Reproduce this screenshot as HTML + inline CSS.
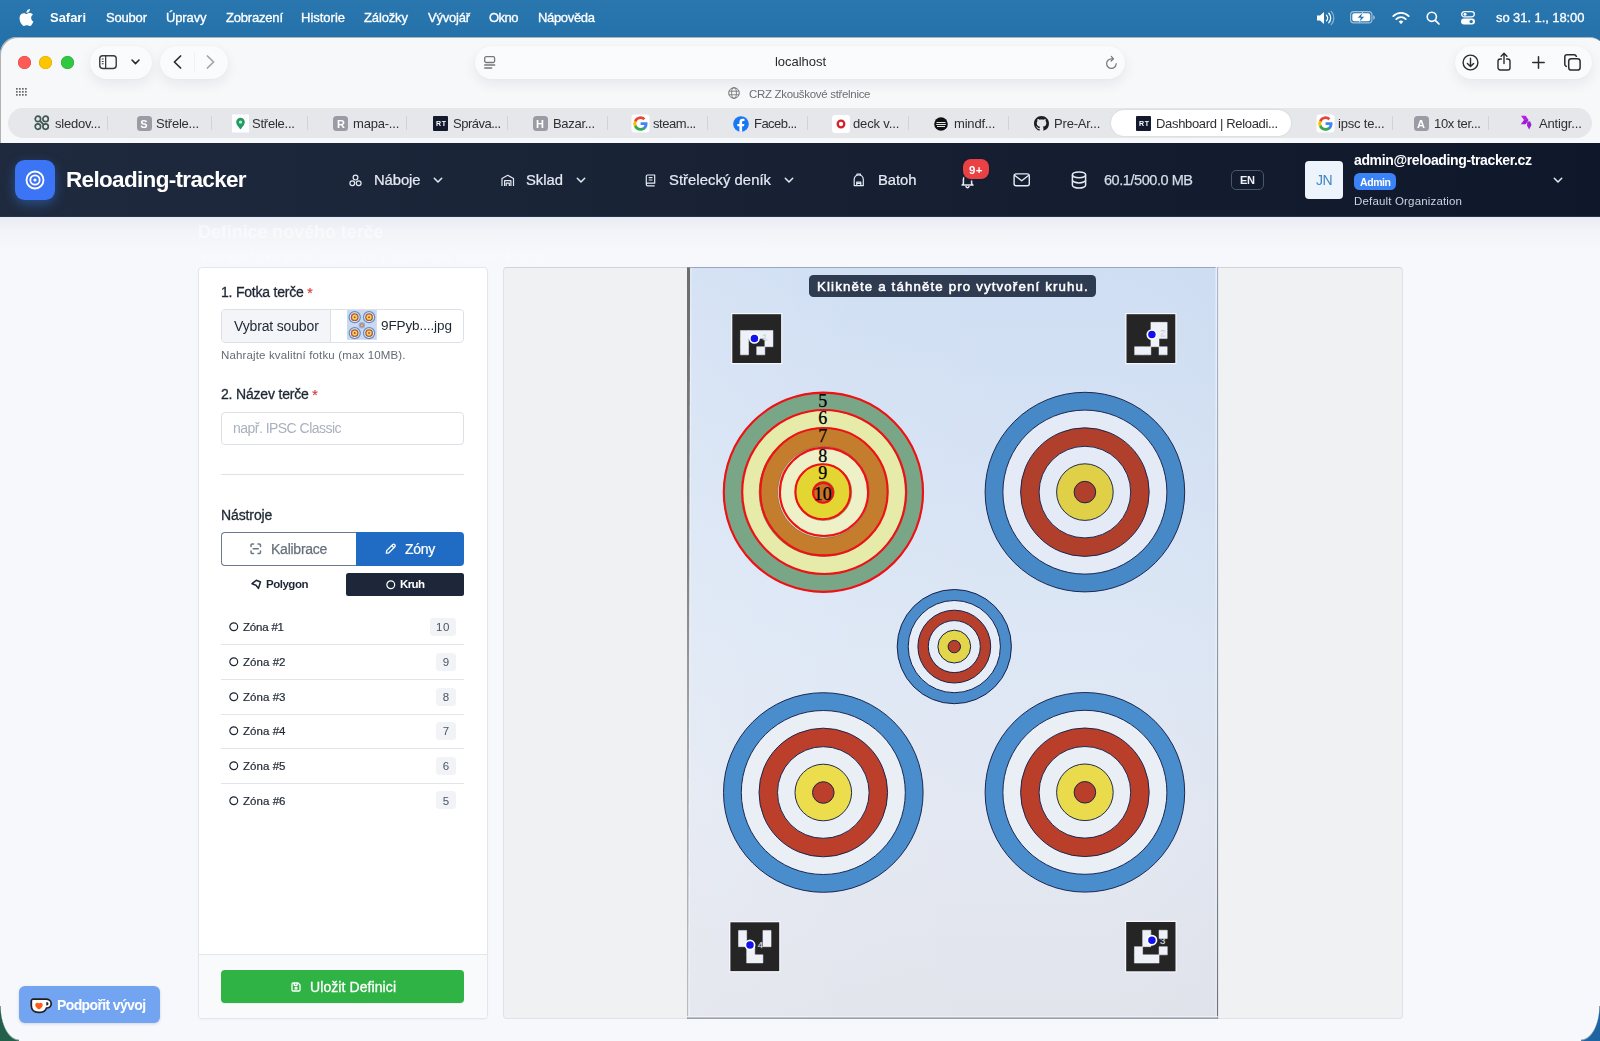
<!DOCTYPE html>
<html lang="cs"><head><meta charset="utf-8"><title>Dashboard | Reloading-tracker</title><style>
html,body{margin:0;padding:0}
body{width:1600px;height:1041px;overflow:hidden;position:relative;background:#2673ac;
 font-family:"Liberation Sans",sans-serif;-webkit-font-smoothing:antialiased}
.t{position:absolute;line-height:0;white-space:nowrap;display:block;will-change:transform}
svg{display:block;overflow:visible}
</style></head>
<body>
<div style="position:absolute;left:0px;top:0px;width:1600px;height:60px;background:linear-gradient(#2a76ae,#2572ab 60%,#2470a8)"></div>
<svg style="position:absolute;left:17.5px;top:8px;" width="17" height="19" viewBox="2 1 20 22"><path fill="#fff" d="M18.71 19.5c-.83 1.24-1.71 2.45-3.05 2.47-1.34.03-1.77-.79-3.29-.79-1.53 0-2 .77-3.27.82-1.31.05-2.3-1.32-3.14-2.53C4.25 17 2.94 12.45 4.7 9.39c.87-1.52 2.43-2.48 4.12-2.51 1.28-.02 2.5.87 3.29.87.78 0 2.26-1.07 3.81-.91.65.03 2.47.26 3.64 1.98-.09.06-2.17 1.28-2.15 3.81.03 3.02 2.65 4.03 2.68 4.04-.03.07-.42 1.44-1.38 2.83M13 3.5c.73-.83 1.94-1.46 2.94-1.5.13 1.17-.34 2.35-1.04 3.19-.69.85-1.83 1.51-2.95 1.42-.15-1.15.41-2.35 1.05-3.11z"/></svg>
<span id="t0" class="t" style="left:50.0px;top:18.2px;font-size:13px;color:#fff;font-weight:700;letter-spacing:-0.028px;">Safari</span>
<span id="t1" class="t" style="left:105.5px;top:18.2px;font-size:13px;color:#fff;letter-spacing:-0.184px;-webkit-text-stroke:0.3px #fff;">Soubor</span>
<span id="t2" class="t" style="left:165.5px;top:18.2px;font-size:13px;color:#fff;letter-spacing:-0.138px;-webkit-text-stroke:0.3px #fff;">Úpravy</span>
<span id="t3" class="t" style="left:225.5px;top:18.2px;font-size:13px;color:#fff;letter-spacing:-0.193px;-webkit-text-stroke:0.3px #fff;">Zobrazení</span>
<span id="t4" class="t" style="left:301.0px;top:18.2px;font-size:13px;color:#fff;letter-spacing:-0.011px;-webkit-text-stroke:0.3px #fff;">Historie</span>
<span id="t5" class="t" style="left:364.0px;top:18.2px;font-size:13px;color:#fff;letter-spacing:-0.133px;-webkit-text-stroke:0.3px #fff;">Záložky</span>
<span id="t6" class="t" style="left:427.5px;top:18.2px;font-size:13px;color:#fff;letter-spacing:-0.227px;-webkit-text-stroke:0.3px #fff;">Vývojář</span>
<span id="t7" class="t" style="left:488.5px;top:18.2px;font-size:13px;color:#fff;letter-spacing:-0.526px;-webkit-text-stroke:0.3px #fff;">Okno</span>
<span id="t8" class="t" style="left:538.0px;top:18.2px;font-size:13px;color:#fff;letter-spacing:-0.326px;-webkit-text-stroke:0.3px #fff;">Nápověda</span>
<span id="t9" class="t" style="left:1495.5px;top:18.2px;font-size:13px;color:#fff;letter-spacing:-0.075px;-webkit-text-stroke:0.3px #fff;">so 31. 1., 18:00</span>
<svg style="position:absolute;left:1316px;top:10px;" width="20" height="16" viewBox="0 0 20 16"><path fill="#fff" d="M1 5.5h3l4-3.5v12l-4-3.5H1z"/><path d="M10.5 5.2a4 4 0 0 1 0 5.6M12.8 3.2a7 7 0 0 1 0 9.6" fill="none" stroke="#fff" stroke-width="1.3" stroke-linecap="round"/><path d="M15.2 1.4a9.6 9.6 0 0 1 0 13.2" fill="none" stroke="#fff" stroke-opacity=".45" stroke-width="1.3" stroke-linecap="round"/></svg>
<svg style="position:absolute;left:1350px;top:11px;" width="26" height="13" viewBox="0 0 26 13"><rect x=".6" y=".6" width="21.3" height="11.3" rx="3.2" fill="none" stroke="#fff" stroke-opacity=".55" stroke-width="1.2"/><rect x="2.3" y="2.3" width="17.9" height="7.9" rx="1.8" fill="#fff"/><path d="M23.3 4.2v4.6c.9-.3 1.5-1.3 1.5-2.3s-.6-2-1.5-2.3z" fill="#fff" fill-opacity=".6"/><path d="M12.6 1.2 7.4 6.9h3.1l-1.2 4.4 5.3-5.8h-3.2z" fill="#2572ab" stroke="#fff" stroke-width=".5"/></svg>
<svg style="position:absolute;left:1391.5px;top:10.5px;" width="18" height="14" viewBox="0 0 18 14"><path d="M9 13.2l2.3-2.7a3.4 3.4 0 0 0-4.6 0z" fill="#fff"/><path d="M4.3 8.1a6.6 6.6 0 0 1 9.4 0M1.3 5.1a10.8 10.8 0 0 1 15.4 0" fill="none" stroke="#fff" stroke-width="1.9" stroke-linecap="round"/></svg>
<svg style="position:absolute;left:1426px;top:10.5px;" width="14" height="14" viewBox="0 0 14 14"><circle cx="5.8" cy="5.8" r="4.6" fill="none" stroke="#fff" stroke-width="1.6"/><path d="M9.3 9.3l3.7 3.7" stroke="#fff" stroke-width="1.7" stroke-linecap="round"/></svg>
<svg style="position:absolute;left:1460.5px;top:11px;" width="14" height="14" viewBox="0 0 14 14"><rect x=".7" y=".7" width="12.6" height="5.2" rx="2.6" fill="none" stroke="#fff" stroke-width="1.3"/><circle cx="4" cy="3.3" r="1.5" fill="#fff"/><rect x="0" y="7.6" width="14" height="6" rx="3" fill="#fff"/><circle cx="10.2" cy="10.6" r="1.7" fill="#2572ab"/></svg>
<div style="position:absolute;left:0px;top:37px;width:1606px;height:1004px;background:#f7f8fa;border-radius:17px 17px 0 0;box-shadow:inset 1px 1px 0 rgba(120,120,125,.55)"></div>
<div style="position:absolute;left:17.9px;top:55.5px;width:13px;height:13px;border-radius:50%;background:#fd5b56;box-shadow:inset 0 0 0 .6px #e2453f"></div>
<div style="position:absolute;left:39.3px;top:55.5px;width:13px;height:13px;border-radius:50%;background:#fdc400;box-shadow:inset 0 0 0 .6px #e0a900"></div>
<div style="position:absolute;left:61px;top:55.5px;width:13px;height:13px;border-radius:50%;background:#2fc840;box-shadow:inset 0 0 0 .6px #22ab33"></div>
<div style="position:absolute;left:89.5px;top:45.5px;width:62.5px;height:33px;background:#fafbfc;border-radius:17px;box-shadow:0 5px 13px rgba(20,30,50,.075),0 0 2px rgba(0,0,0,.035)"></div>
<div style="position:absolute;left:160px;top:45.5px;width:68px;height:33px;background:#fafbfc;border-radius:17px;box-shadow:0 5px 13px rgba(20,30,50,.075),0 0 2px rgba(0,0,0,.035)"></div>
<svg style="position:absolute;left:99.2px;top:54.6px;" width="18" height="14.2" viewBox="0 0 19 15"><rect x=".8" y=".8" width="17.4" height="13.4" rx="3" fill="none" stroke="#3c3c40" stroke-width="1.5"/><path d="M7 1v13" stroke="#3c3c40" stroke-width="1.4"/><path d="M2.9 4.3h2M2.9 6.8h2M2.9 9.3h2" stroke="#3c3c40" stroke-width="1.1"/></svg>
<svg style="position:absolute;left:130.5px;top:58.5px;" width="9" height="6" viewBox="0 0 9 6"><path d="M1 1l3.5 3.6L8 1" fill="none" stroke="#2c2c2e" stroke-width="1.6" stroke-linecap="round" stroke-linejoin="round"/></svg>
<svg style="position:absolute;left:172.5px;top:55px;" width="9" height="14" viewBox="0 0 9 14"><path d="M7.6 1L1.4 7l6.2 6" fill="none" stroke="#2c2c2e" stroke-width="1.7" stroke-linecap="round" stroke-linejoin="round"/></svg>
<svg style="position:absolute;left:206px;top:55px;" width="9" height="14" viewBox="0 0 9 14"><path d="M1.4 1l6.2 6-6.2 6" fill="none" stroke="#a3a3a8" stroke-width="1.7" stroke-linecap="round" stroke-linejoin="round"/></svg>
<div style="position:absolute;left:194px;top:52px;width:1px;height:20px;background:#f0f1f3"></div>
<div style="position:absolute;left:475px;top:45.5px;width:650px;height:33px;background:#fafbfc;border-radius:17px;box-shadow:0 5px 13px rgba(20,30,50,.075),0 0 2px rgba(0,0,0,.035)"></div>
<svg style="position:absolute;left:484px;top:55.5px;" width="12" height="13" viewBox="0 0 12 13"><rect x=".700" y=".700" width="9.900" height="5.800" rx="1.500" fill="none" stroke="#77777b" stroke-width="1.300"/><path d="M.700 9h10M.700 12h7" stroke="#77777b" stroke-width="1.300" stroke-linecap="round"/></svg>
<span id="t10" class="t" style="left:775.0px;top:62.4px;font-size:13px;color:#2a2a2c;letter-spacing:-0.039px;">localhost</span>
<svg style="position:absolute;left:1105px;top:55px;" width="13" height="15" viewBox="0 0 13 15"><path d="M11.2 8.6a4.8 4.8 0 1 1-4.8-4.8h1.4" fill="none" stroke="#77777b" stroke-width="1.2" stroke-linecap="round"/><path d="M6.3 1.4l2.2 2.4-2.4 2.2" fill="none" stroke="#77777b" stroke-width="1.2" stroke-linecap="round" stroke-linejoin="round"/></svg>
<div style="position:absolute;left:1455px;top:45.5px;width:136.5px;height:33px;background:#fafbfc;border-radius:17px;box-shadow:0 5px 13px rgba(20,30,50,.075),0 0 2px rgba(0,0,0,.035)"></div>
<svg style="position:absolute;left:1462px;top:53.5px;" width="17" height="17" viewBox="0 0 17 17"><circle cx="8.5" cy="8.5" r="7.4" fill="none" stroke="#2c2c2e" stroke-width="1.4"/><path d="M8.5 4.3v8M5.4 9.4l3.1 3.1 3.1-3.1" fill="none" stroke="#2c2c2e" stroke-width="1.4" stroke-linecap="round" stroke-linejoin="round"/></svg>
<svg style="position:absolute;left:1497px;top:51.5px;" width="14" height="19" viewBox="0 0 14 19"><path d="M4.4 7H3.2A2.2 2.2 0 0 0 1 9.2v6.6A2.2 2.2 0 0 0 3.2 18h7.6a2.2 2.2 0 0 0 2.2-2.2V9.2A2.2 2.2 0 0 0 10.800 7H9.600" fill="none" stroke="#2c2c2e" stroke-width="1.4" stroke-linecap="round"/><path d="M7 11.600V1.400M4.1 4.200L7 1.300l2.900 2.900" fill="none" stroke="#2c2c2e" stroke-width="1.4" stroke-linecap="round" stroke-linejoin="round"/></svg>
<svg style="position:absolute;left:1532px;top:55.5px;" width="13" height="13" viewBox="0 0 13 13"><path d="M6.5.8v11.400M.8 6.500h11.400" stroke="#2c2c2e" stroke-width="1.5" stroke-linecap="round"/></svg>
<svg style="position:absolute;left:1564px;top:53.5px;" width="17" height="17" viewBox="0 0 17 17"><rect x="4.700" y="4.700" width="11.400" height="11.400" rx="2.600" fill="none" stroke="#2c2c2e" stroke-width="1.500"/><path d="M12.400 2.600V2.900A2.100 2.100 0 0 0 10.300.8H3A2.200 2.200 0 0 0 .8 3v7.300a2.100 2.100 0 0 0 2.100 2.100h-.3" fill="none" stroke="#2c2c2e" stroke-width="1.500" stroke-linecap="round"/></svg>
<svg style="position:absolute;left:15.5px;top:87.5px;" width="11" height="8" viewBox="0 0 11 8"><rect x="0" y="0" width="1.700" height="1.700" fill="#6a6a6e"/><rect x="3" y="0" width="1.700" height="1.700" fill="#6a6a6e"/><rect x="6" y="0" width="1.700" height="1.700" fill="#6a6a6e"/><rect x="9" y="0" width="1.700" height="1.700" fill="#6a6a6e"/><rect x="0" y="3" width="1.700" height="1.700" fill="#6a6a6e"/><rect x="3" y="3" width="1.700" height="1.700" fill="#6a6a6e"/><rect x="6" y="3" width="1.700" height="1.700" fill="#6a6a6e"/><rect x="9" y="3" width="1.700" height="1.700" fill="#6a6a6e"/><rect x="0" y="6" width="1.700" height="1.700" fill="#6a6a6e"/><rect x="3" y="6" width="1.700" height="1.700" fill="#6a6a6e"/><rect x="6" y="6" width="1.700" height="1.700" fill="#6a6a6e"/><rect x="9" y="6" width="1.700" height="1.700" fill="#6a6a6e"/></svg>
<svg style="position:absolute;left:728px;top:87px;" width="12" height="12" viewBox="0 0 12 12"><circle cx="6" cy="6" r="5.300" fill="none" stroke="#77777b" stroke-width="1"/><ellipse cx="6" cy="6" rx="2.400" ry="5.300" fill="none" stroke="#77777b" stroke-width=".9"/><path d="M.9 4.200h10.200M.9 7.800h10.200" stroke="#77777b" stroke-width=".9"/></svg>
<span id="t11" class="t" style="left:748.5px;top:93.5px;font-size:11.5px;color:#6e6e73;letter-spacing:-0.317px;">CRZ Zkouškové střelnice</span>
<div style="position:absolute;left:7.5px;top:108px;width:1584.5px;height:29.5px;background:#e5e7ea;border-radius:15px"></div>
<div style="position:absolute;left:1110.6px;top:109.5px;width:180px;height:26.5px;background:#fff;border-radius:13.500px;box-shadow:0 0 2px rgba(0,0,0,.12)"></div>
<div style="position:absolute;left:106.8px;top:116px;width:1px;height:14px;background:#d2d3d8"></div>
<div style="position:absolute;left:210.5px;top:116px;width:1px;height:14px;background:#d2d3d8"></div>
<div style="position:absolute;left:307.3px;top:116px;width:1px;height:14px;background:#d2d3d8"></div>
<div style="position:absolute;left:406.2px;top:116px;width:1px;height:14px;background:#d2d3d8"></div>
<div style="position:absolute;left:506.8px;top:116px;width:1px;height:14px;background:#d2d3d8"></div>
<div style="position:absolute;left:607.2px;top:116px;width:1px;height:14px;background:#d2d3d8"></div>
<div style="position:absolute;left:707.1px;top:116px;width:1px;height:14px;background:#d2d3d8"></div>
<div style="position:absolute;left:807.4px;top:116px;width:1px;height:14px;background:#d2d3d8"></div>
<div style="position:absolute;left:907.5px;top:116px;width:1px;height:14px;background:#d2d3d8"></div>
<div style="position:absolute;left:1007.9px;top:116px;width:1px;height:14px;background:#d2d3d8"></div>
<div style="position:absolute;left:1391.9px;top:116px;width:1px;height:14px;background:#d2d3d8"></div>
<div style="position:absolute;left:1488.1px;top:116px;width:1px;height:14px;background:#d2d3d8"></div>
<svg style="position:absolute;left:34px;top:115px;" width="15.5" height="15.5" viewBox="0 0 15.5 15.5"><g fill="none" stroke="#3f5853" stroke-width="1.700"><circle cx="3.900" cy="3.900" r="2.700"/><circle cx="11.600" cy="3.900" r="2.700"/><circle cx="3.900" cy="11.600" r="2.700"/><circle cx="11.600" cy="11.600" r="2.700"/><path d="M5.900 5.900l3.700 3.700"/></g></svg>
<span id="t12" class="t" style="left:54.7px;top:123.5px;font-size:13px;color:#2f2f33;letter-spacing:-0.194px;">sledov...</span>
<div style="position:absolute;left:136.7px;top:116px;width:15px;height:15px;background:#9b9ba6;border-radius:3.500px"><span id="t13" class="t" style="left:7.5px;top:7.8px;font-size:11px;color:#fff;transform:translateX(-50%);font-weight:700;">S</span></div>
<span id="t14" class="t" style="left:156.0px;top:123.5px;font-size:13px;color:#2f2f33;letter-spacing:-0.225px;">Střele...</span>
<svg style="position:absolute;left:233px;top:116px;" width="15" height="15" viewBox="0 0 15 15"><rect x="-1" y="-1.500" width="17" height="18" fill="#fff"/><path d="M7.500 1.800a4.300 4.300 0 0 0-4.300 4.300c0 3 4.300 7.400 4.300 7.400s4.300-4.400 4.300-7.400a4.300 4.300 0 0 0-4.300-4.300z" fill="#1f9d63"/><circle cx="7.500" cy="6.100" r="1.700" fill="#bfe8d2"/></svg>
<span id="t15" class="t" style="left:252.4px;top:123.5px;font-size:13px;color:#2f2f33;letter-spacing:-0.237px;">Střele...</span>
<div style="position:absolute;left:333px;top:116px;width:15px;height:15px;background:#9b9ba6;border-radius:3.500px"><span id="t16" class="t" style="left:7.5px;top:7.8px;font-size:11px;color:#fff;transform:translateX(-50%);font-weight:700;">R</span></div>
<span id="t17" class="t" style="left:352.7px;top:123.5px;font-size:13px;color:#2f2f33;letter-spacing:-0.198px;">mapa-...</span>
<div style="position:absolute;left:433px;top:116px;width:15px;height:15px;background:#131a2e;border-radius:1px"><span id="t18" class="t" style="left:2.5px;top:7.7px;font-size:7px;color:#fff;font-weight:700;letter-spacing:0.656px;">RT</span></div>
<span id="t19" class="t" style="left:453.0px;top:123.5px;font-size:13px;color:#2f2f33;letter-spacing:-0.504px;">Správa...</span>
<div style="position:absolute;left:532.8px;top:116px;width:15px;height:15px;background:#9b9ba6;border-radius:3.500px"><span id="t20" class="t" style="left:7.5px;top:7.8px;font-size:11px;color:#fff;transform:translateX(-50%);font-weight:700;">H</span></div>
<span id="t21" class="t" style="left:553.0px;top:123.5px;font-size:13px;color:#2f2f33;letter-spacing:-0.297px;">Bazar...</span>
<svg style="position:absolute;left:633px;top:116px;" width="15" height="15" viewBox="0 0 15 15"><rect x="-1.500" y="-1.500" width="18" height="18" rx="3" fill="#fff"/><path d="M14.500 7.700c0-.5 0-1-.1-1.400H7.600v2.700h3.900a3.300 3.300 0 0 1-1.400 2.200v1.800h2.300c1.300-1.200 2.100-3 2.100-5.300z" fill="#4285f4"/><path d="M7.600 14.800c1.900 0 3.600-.6 4.800-1.800l-2.300-1.800c-.7.400-1.500.7-2.500.7-1.900 0-3.500-1.300-4.100-3H1.100v1.900a7.200 7.200 0 0 0 6.500 4z" fill="#34a853"/><path d="M3.500 8.900a4.300 4.300 0 0 1 0-2.800V4.200H1.100a7.200 7.200 0 0 0 0 6.500z" fill="#fbbc05"/><path d="M7.600 3.100c1.100 0 2 .4 2.800 1.100l2-2A7.200 7.200 0 0 0 1.100 4.200l2.400 1.900c.6-1.700 2.200-3 4.100-3z" fill="#ea4335"/></svg>
<span id="t22" class="t" style="left:653.3px;top:123.5px;font-size:13px;color:#2f2f33;letter-spacing:-0.436px;">steam...</span>
<svg style="position:absolute;left:733.3px;top:115.5px;" width="16" height="16" viewBox="0 0 16 16"><circle cx="8" cy="8" r="7.800" fill="#1877f2"/><path d="M11 10.300l.4-2.400H9.100V6.400c0-.7.300-1.300 1.300-1.300h1.100V3c-.5-.1-1.200-.200-1.900-.200-2 0-3.200 1.200-3.200 3.300v1.800H4.300v2.400h2.100v5.400a8 8 0 0 0 2.700 0v-5.400z" fill="#fff"/></svg>
<span id="t23" class="t" style="left:753.5px;top:123.5px;font-size:13px;color:#2f2f33;letter-spacing:-0.538px;">Faceb...</span>
<svg style="position:absolute;left:832.9px;top:115.5px;" width="16" height="16" viewBox="0 0 16 16"><rect x="-1" y="-1" width="18" height="18" rx="3" fill="#fff"/><circle cx="8" cy="8" r="3.300" fill="none" stroke="#d6202a" stroke-width="2.300"/></svg>
<span id="t24" class="t" style="left:853.4px;top:123.5px;font-size:13px;color:#2f2f33;letter-spacing:-0.144px;">deck v...</span>
<svg style="position:absolute;left:934.4px;top:116.5px;" width="14" height="14" viewBox="0 0 14 14"><circle cx="7" cy="7" r="6.800" fill="#111"/><path d="M2.500 5.500h9M2.200 7.500h9.600M3 9.500h8" stroke="#e8e8e8" stroke-width="1"/></svg>
<span id="t25" class="t" style="left:953.7px;top:123.5px;font-size:13px;color:#2f2f33;letter-spacing:-0.189px;">mindf...</span>
<svg style="position:absolute;left:1033.7px;top:116px;" width="15" height="15" viewBox="0 0 16 16"><path fill="#1b1f23" d="M8 0C3.580 0 0 3.580 0 8c0 3.540 2.290 6.530 5.470 7.590.4.070.55-.17.550-.38 0-.19-.01-.82-.01-1.490-2.010.37-2.530-.49-2.690-.94-.09-.23-.48-.94-.82-1.130-.28-.15-.68-.52-.01-.53.630-.01 1.080.58 1.230.82.720 1.210 1.870.87 2.330.66.070-.52.280-.87.510-1.070-1.780-.2-3.640-.89-3.640-3.950 0-.87.310-1.590.82-2.150-.08-.2-.36-1.020.08-2.120 0 0 .67-.21 2.200.82.640-.18 1.320-.27 2-.27s1.360.09 2 .27c1.530-1.040 2.200-.82 2.200-.82.440 1.100.16 1.920.08 2.120.51.560.82 1.270.82 2.150 0 3.070-1.870 3.750-3.650 3.950.29.250.54.730.54 1.480 0 1.070-.01 1.930-.01 2.200 0 .21.150.46.550.38A8.010 8.010 0 0 0 16 8c0-4.420-3.580-8-8-8z"/></svg>
<span id="t26" class="t" style="left:1053.5px;top:123.5px;font-size:13px;color:#2f2f33;letter-spacing:-0.173px;">Pre-Ar...</span>
<div style="position:absolute;left:1136px;top:116px;width:15px;height:15px;background:#131a2e;border-radius:1px"><span id="t27" class="t" style="left:2.5px;top:7.7px;font-size:7px;color:#fff;font-weight:700;letter-spacing:0.656px;">RT</span></div>
<span id="t28" class="t" style="left:1155.5px;top:123.5px;font-size:13px;color:#2f2f33;letter-spacing:-0.330px;">Dashboard | Reloadi...</span>
<svg style="position:absolute;left:1317.5px;top:116px;" width="15" height="15" viewBox="0 0 15 15"><rect x="-1.500" y="-1.500" width="18" height="18" rx="3" fill="#fff"/><path d="M14.500 7.700c0-.5 0-1-.1-1.400H7.600v2.700h3.900a3.300 3.300 0 0 1-1.400 2.200v1.800h2.300c1.300-1.200 2.100-3 2.100-5.300z" fill="#4285f4"/><path d="M7.600 14.800c1.900 0 3.600-.6 4.800-1.800l-2.300-1.800c-.7.400-1.500.7-2.500.7-1.900 0-3.500-1.300-4.100-3H1.100v1.900a7.200 7.200 0 0 0 6.500 4z" fill="#34a853"/><path d="M3.500 8.900a4.300 4.300 0 0 1 0-2.800V4.200H1.100a7.200 7.200 0 0 0 0 6.500z" fill="#fbbc05"/><path d="M7.600 3.100c1.100 0 2 .4 2.800 1.100l2-2A7.200 7.200 0 0 0 1.100 4.200l2.400 1.900c.6-1.700 2.200-3 4.100-3z" fill="#ea4335"/></svg>
<span id="t29" class="t" style="left:1338.4px;top:123.5px;font-size:13px;color:#2f2f33;letter-spacing:-0.202px;">ipsc te...</span>
<div style="position:absolute;left:1413.7px;top:116px;width:15px;height:15px;background:#9b9ba6;border-radius:3.500px"><span id="t30" class="t" style="left:7.5px;top:7.8px;font-size:11px;color:#fff;transform:translateX(-50%);font-weight:700;">A</span></div>
<span id="t31" class="t" style="left:1434.0px;top:123.5px;font-size:13px;color:#2f2f33;letter-spacing:-0.331px;">10x ter...</span>
<svg style="position:absolute;left:1520px;top:115px;" width="12" height="15" viewBox="0 0 12 15"><path d="M1 .7h4.600l3 4.300H4z" fill="#b51fe6"/><path d="M4 5h4.600L5.700 9.200H.8z" fill="#a21bd8"/><path d="M7.300 6.700l2.800-.5 1.400 3.700-2.400 4.500-2.100-3.900z" fill="#9a22d6"/></svg>
<span id="t32" class="t" style="left:1538.6px;top:123.5px;font-size:13px;color:#2f2f33;letter-spacing:-0.160px;">Antigr...</span>
<div style="position:absolute;left:0px;top:143px;width:1600px;height:898px;background:#f6f8fc"></div>
<div style="position:absolute;left:0px;top:217px;width:1600px;height:34px;background:linear-gradient(rgba(30,40,60,.06),rgba(30,40,60,.02) 45%,rgba(30,40,60,0))"></div>
<span id="t33" class="t" style="left:198.0px;top:231.5px;font-size:18px;color:#fff;font-weight:700;letter-spacing:-0.073px;opacity:.5;">Definice nového terče</span>
<span id="t34" class="t" style="left:198.0px;top:257.0px;font-size:12px;color:#fff;letter-spacing:0.436px;opacity:.3;">Nahrajte fotku terče, zkalibrujte ji a definujte bodované zóny.</span>
<div style="position:absolute;left:0px;top:143px;width:1600px;height:74px;background:linear-gradient(90deg,#1f2a3e,#172033 55%,#0f172a);border-bottom:1px solid #1d3557;box-sizing:border-box"></div>
<div style="position:absolute;left:14.8px;top:159.8px;width:39.8px;height:39.8px;border-radius:9.500px;background:#3b75f6;box-shadow:0 4px 12px rgba(59,130,246,.42)"></div>
<svg style="position:absolute;left:23.7px;top:169.3px;" width="22" height="22" viewBox="0 0 22 22"><circle cx="11" cy="11" r="8.500" fill="none" stroke="#fff" stroke-width="1.800"/><circle cx="11" cy="11" r="4.700" fill="none" stroke="#fff" stroke-width="1.800"/><circle cx="11" cy="11" r="1.600" fill="#fff"/></svg>
<span id="t35" class="t" style="left:66.0px;top:180.3px;font-size:22.5px;color:#fff;font-weight:700;letter-spacing:-0.670px;">Reloading-tracker</span>
<svg style="position:absolute;left:348.5px;top:173.5px;" width="13" height="13" viewBox="0 0 13 13"><g fill="none" stroke="#e5eaf2" stroke-width="1.200"><circle cx="6.500" cy="3.600" r="2.400"/><circle cx="3.300" cy="9.200" r="2.400"/><circle cx="9.700" cy="9.200" r="2.400"/></g></svg>
<span id="t36" class="t" style="left:373.5px;top:180.0px;font-size:14.8px;color:#e5eaf2;letter-spacing:-0.078px;-webkit-text-stroke:0.22px #e5eaf2;">Náboje</span>
<svg style="position:absolute;left:432.5px;top:177px;" width="10" height="7" viewBox="0 0 10 7"><path d="M1.300 1.300L5 5l3.700-3.700" fill="none" stroke="#e5eaf2" stroke-width="1.500" stroke-linecap="round" stroke-linejoin="round"/></svg>
<svg style="position:absolute;left:501px;top:173.5px;" width="13.5" height="13" viewBox="0 0 13.5 13"><g fill="none" stroke="#e5eaf2" stroke-width="1.200" stroke-linejoin="round"><path d="M1 12V4.600L6.750 1.300 12.500 4.600V12"/><path d="M3.600 12V6.600h6.300V12"/><path d="M5.200 12V9.200h3.100V12"/></g></svg>
<span id="t37" class="t" style="left:526.0px;top:180.0px;font-size:14.8px;color:#e5eaf2;letter-spacing:-0.004px;-webkit-text-stroke:0.22px #e5eaf2;">Sklad</span>
<svg style="position:absolute;left:575.5px;top:177px;" width="10" height="7" viewBox="0 0 10 7"><path d="M1.300 1.300L5 5l3.700-3.700" fill="none" stroke="#e5eaf2" stroke-width="1.500" stroke-linecap="round" stroke-linejoin="round"/></svg>
<svg style="position:absolute;left:644.5px;top:173.5px;" width="11" height="13" viewBox="0 0 11 13"><g fill="none" stroke="#e5eaf2" stroke-width="1.200" stroke-linejoin="round"><path d="M1.300 10.400V2.300a1.300 1.300 0 0 1 1.300-1.300h7.100v8.200H2.600a1.300 1.300 0 0 0 0 2.600h7.100"/><path d="M3.700 3.700h3.800M3.700 6h3.800"/></g></svg>
<span id="t38" class="t" style="left:669.0px;top:180.0px;font-size:14.8px;color:#e5eaf2;letter-spacing:0.059px;-webkit-text-stroke:0.22px #e5eaf2;">Střelecký deník</span>
<svg style="position:absolute;left:784px;top:177px;" width="10" height="7" viewBox="0 0 10 7"><path d="M1.300 1.300L5 5l3.700-3.700" fill="none" stroke="#e5eaf2" stroke-width="1.500" stroke-linecap="round" stroke-linejoin="round"/></svg>
<svg style="position:absolute;left:853px;top:173px;" width="11.5" height="13.5" viewBox="0 0 11.5 13.5"><g fill="none" stroke="#e5eaf2" stroke-width="1.200" stroke-linejoin="round"><path d="M1.200 12.600V6.400a4.550 4.550 0 0 1 9.100 0v6.200z"/><path d="M4 2.400V1h3.500v1.400"/><path d="M3.700 12.600V9h4.100v3.600M3.700 10.300h4.100"/></g></svg>
<span id="t39" class="t" style="left:877.5px;top:180.0px;font-size:14.8px;color:#e5eaf2;letter-spacing:-0.043px;-webkit-text-stroke:0.22px #e5eaf2;">Batoh</span>
<svg style="position:absolute;left:960px;top:173px;" width="15" height="15" viewBox="0 0 15 15"><g fill="none" stroke="#e5eaf2" stroke-width="1.500" stroke-linecap="round" stroke-linejoin="round"><path d="M3.400 10.800V6.600a4.100 4.100 0 0 1 8.200 0v4.200l1.300 1.300H2.100z"/><path d="M6 13.600a1.600 1.600 0 0 0 3 0"/></g></svg>
<div style="position:absolute;left:962.5px;top:159px;width:26px;height:20px;background:#ea4244;border-radius:8px;box-shadow:0 0 0 1.500px rgba(20,28,48,.9)"><span id="t40" class="t" style="left:6.0px;top:10.6px;font-size:11.5px;color:#fff;font-weight:700;letter-spacing:0.375px;">9+</span></div>
<svg style="position:absolute;left:1012.6px;top:173px;" width="17.4" height="13.6" viewBox="0 0 18 14.5"><g fill="none" stroke="#e5eaf2" stroke-width="1.500" stroke-linejoin="round"><rect x=".9" y=".9" width="16.200" height="12.700" rx="2.200"/><path d="M1.400 2.400L9 8.300l7.600-5.900"/></g></svg>
<svg style="position:absolute;left:1070.5px;top:171px;" width="16" height="18" viewBox="0 0 16 18"><g fill="none" stroke="#e5eaf2" stroke-width="1.500"><ellipse cx="8" cy="3.800" rx="6.600" ry="2.900"/><path d="M1.400 3.800v10.400c0 1.600 3 2.900 6.600 2.900s6.600-1.300 6.600-2.900V3.800"/><path d="M1.400 9c0 1.600 3 2.900 6.600 2.900s6.600-1.300 6.600-2.900"/></g></svg>
<span id="t41" class="t" style="left:1104.0px;top:180.2px;font-size:14.5px;color:#d5dce8;letter-spacing:-0.444px;-webkit-text-stroke:0.25px #d5dce8;">60.1/500.0 MB</span>
<div style="position:absolute;left:1231px;top:170px;width:33px;height:20px;border:1px solid #4a5568;border-radius:5px;box-sizing:border-box"><span id="t42" class="t" style="left:7.5px;top:9.3px;font-size:11px;color:#eef2f7;font-weight:700;letter-spacing:-0.281px;">EN</span></div>
<div style="position:absolute;left:1305px;top:161px;width:38px;height:37.5px;background:#eef4fb;border-radius:4px"><span id="t43" class="t" style="left:10.5px;top:19.0px;font-size:14px;color:#3f86c6;letter-spacing:-0.625px;">JN</span></div>
<span id="t44" class="t" style="left:1354.0px;top:160.3px;font-size:14px;color:#fff;font-weight:700;letter-spacing:-0.366px;">admin@reloading-tracker.cz</span>
<div style="position:absolute;left:1354px;top:173px;width:42px;height:16.5px;background:#3b82f6;border-radius:5.500px"><span id="t45" class="t" style="left:5.5px;top:8.5px;font-size:10.5px;color:#fff;font-weight:700;letter-spacing:-0.418px;">Admin</span></div>
<span id="t46" class="t" style="left:1354.0px;top:201.2px;font-size:11.5px;color:#cbd3df;letter-spacing:0.166px;">Default Organization</span>
<svg style="position:absolute;left:1553px;top:177px;" width="10" height="7" viewBox="0 0 10 7"><path d="M1.300 1.300L5 5l3.700-3.700" fill="none" stroke="#e5eaf2" stroke-width="1.500" stroke-linecap="round" stroke-linejoin="round"/></svg>
<div style="position:absolute;left:198px;top:267px;width:289.5px;height:752px;background:#fff;border:1px solid #e3e6ec;border-radius:4px;box-sizing:border-box;box-shadow:0 1px 2px rgba(30,40,60,.04)"></div>
<span id="t47" class="t" style="left:220.8px;top:292.4px;font-size:14px;color:#1d2733;letter-spacing:-0.223px;-webkit-text-stroke:0.3px #1d2733;">1. Fotka terče</span>
<span id="t48" class="t" style="left:310.0px;top:292.5px;font-size:14px;color:#d63939;transform:translateX(-50%);-webkit-text-stroke:0.2px #d63939;">*</span>
<div style="position:absolute;left:221px;top:309px;width:242.7px;height:33.5px;border:1px solid #dde1e7;border-radius:4px;box-sizing:border-box;background:#fff;overflow:hidden"><div style="position:absolute;left:-1px;top:-1px;width:109.5px;height:33.5px;background:#f3f5f8;border-right:1px solid #dde1e7;box-sizing:border-box"></div></div>
<span id="t49" class="t" style="left:233.6px;top:326.0px;font-size:14px;color:#1d2733;letter-spacing:-0.153px;">Vybrat soubor</span>
<svg style="position:absolute;left:347.2px;top:309.5px;" width="29.8" height="29.8" viewBox="0 0 29 29"><rect width="29" height="29" fill="#cbd8ee"/><circle cx="7.5" cy="7" r="6" fill="#5b8fc9"/><circle cx="7.5" cy="7" r="4.800" fill="#e6ecf6"/><circle cx="7.5" cy="7" r="3.800" fill="#c0503a"/><circle cx="7.5" cy="7" r="2.500" fill="#e8dc5a"/><circle cx="7.5" cy="7" r="1" fill="#c0503a"/><circle cx="21.5" cy="7" r="6" fill="#5b8fc9"/><circle cx="21.5" cy="7" r="4.800" fill="#e6ecf6"/><circle cx="21.5" cy="7" r="3.800" fill="#c0503a"/><circle cx="21.5" cy="7" r="2.500" fill="#e8dc5a"/><circle cx="21.5" cy="7" r="1" fill="#c0503a"/><circle cx="7.5" cy="22.5" r="6" fill="#5b8fc9"/><circle cx="7.5" cy="22.5" r="4.800" fill="#e6ecf6"/><circle cx="7.5" cy="22.5" r="3.800" fill="#c0503a"/><circle cx="7.5" cy="22.5" r="2.500" fill="#e8dc5a"/><circle cx="7.5" cy="22.5" r="1" fill="#c0503a"/><circle cx="21.5" cy="22.5" r="6" fill="#5b8fc9"/><circle cx="21.5" cy="22.5" r="4.800" fill="#e6ecf6"/><circle cx="21.5" cy="22.5" r="3.800" fill="#c0503a"/><circle cx="21.5" cy="22.5" r="2.500" fill="#e8dc5a"/><circle cx="21.5" cy="22.5" r="1" fill="#c0503a"/><circle cx="14.500" cy="14.800" r="3.200" fill="#9fb1cf"/><circle cx="14.500" cy="14.800" r="2.100" fill="#b98a86"/><circle cx="14.500" cy="14.800" r="1" fill="#cdb98a"/></svg>
<span id="t50" class="t" style="left:380.6px;top:326.0px;font-size:13.5px;color:#1d2733;letter-spacing:-0.104px;">9FPyb....jpg</span>
<span id="t51" class="t" style="left:221.0px;top:354.6px;font-size:11.5px;color:#636b76;letter-spacing:0.144px;">Nahrajte kvalitní fotku (max 10MB).</span>
<span id="t52" class="t" style="left:220.8px;top:394.4px;font-size:14px;color:#1d2733;letter-spacing:-0.182px;-webkit-text-stroke:0.3px #1d2733;">2. Název terče</span>
<span id="t53" class="t" style="left:315.3px;top:394.5px;font-size:14px;color:#d63939;transform:translateX(-50%);-webkit-text-stroke:0.2px #d63939;">*</span>
<div style="position:absolute;left:221px;top:411.5px;width:242.7px;height:33px;border:1px solid #dde1e7;border-radius:4px;box-sizing:border-box;background:#fff"></div>
<span id="t54" class="t" style="left:233.0px;top:428.3px;font-size:14px;color:#a9b1bd;letter-spacing:-0.528px;">např. IPSC Classic</span>
<div style="position:absolute;left:221px;top:474.3px;width:242.7px;height:1px;background:#dfe3e8"></div>
<span id="t55" class="t" style="left:221.0px;top:515.2px;font-size:14px;color:#1d2733;letter-spacing:-0.106px;-webkit-text-stroke:0.3px #1d2733;">Nástroje</span>
<div style="position:absolute;left:221px;top:532px;width:135.5px;height:33.5px;border:1px solid #6c7a8c;border-right:0;border-radius:4px 0 0 4px;box-sizing:border-box;background:#fff"></div>
<div style="position:absolute;left:355.7px;top:532px;width:108px;height:33.5px;background:#206bc4;border-radius:0 4px 4px 0"></div>
<svg style="position:absolute;left:250px;top:543px;" width="11.5" height="11.5" viewBox="0 0 11.5 11.5"><g fill="none" stroke="#6c7684" stroke-width="1.500" stroke-linecap="round"><path d="M1 3.500V2.300A1.300 1.300 0 0 1 2.300 1h1.200M8 1h1.200a1.300 1.300 0 0 1 1.300 1.300v1.200M10.500 8v1.200a1.300 1.300 0 0 1-1.300 1.300H8M3.500 10.500H2.300A1.300 1.300 0 0 1 1 9.200V8M3.200 5.750h5.100"/></g></svg>
<span id="t56" class="t" style="left:270.6px;top:548.8px;font-size:14px;color:#67717d;letter-spacing:-0.247px;-webkit-text-stroke:0.25px #67717d;">Kalibrace</span>
<svg style="position:absolute;left:384.5px;top:543px;" width="11.5" height="11.5" viewBox="0 0 11.5 11.5"><g fill="none" stroke="#fff" stroke-width="1.300" stroke-linejoin="round"><path d="M1.300 10.200l.4-2.600 5.900-5.900a1.500 1.500 0 0 1 2.200 2.200L3.900 9.800z"/><path d="M6.700 2.600l2.200 2.200"/></g></svg>
<span id="t57" class="t" style="left:404.8px;top:548.8px;font-size:14px;color:#fff;letter-spacing:-0.308px;-webkit-text-stroke:0.2px #fff;">Zóny</span>
<svg style="position:absolute;left:250.5px;top:579px;" width="10.5" height="10.5" viewBox="0 0 10.5 10.5"><path d="M1 4.700L5.300 1.300 9.500 3 7.400 9.400 5 6.300z" fill="none" stroke="#1d2733" stroke-width="1.500" stroke-linejoin="round"/></svg>
<span id="t58" class="t" style="left:265.8px;top:584.2px;font-size:11.5px;color:#1d2733;font-weight:700;letter-spacing:-0.479px;">Polygon</span>
<div style="position:absolute;left:346px;top:573px;width:117.7px;height:22.5px;background:#1d2739;border-radius:2.500px"></div>
<svg style="position:absolute;left:386px;top:579.5px;" width="9.5" height="9.5" viewBox="0 0 9.5 9.5"><circle cx="4.750" cy="4.750" r="3.900" fill="none" stroke="#fff" stroke-width="1.200"/></svg>
<span id="t59" class="t" style="left:400.0px;top:584.2px;font-size:11.5px;color:#fff;font-weight:700;letter-spacing:-0.615px;">Kruh</span>
<svg style="position:absolute;left:229.3px;top:622.2px;" width="9.5" height="9.5" viewBox="0 0 9.5 9.5"><circle cx="4.750" cy="4.750" r="3.900" fill="none" stroke="#1d2733" stroke-width="1.200"/></svg>
<span id="t60" class="t" style="left:243.0px;top:627.2px;font-size:11.5px;color:#1d2733;letter-spacing:-0.201px;-webkit-text-stroke:0.2px #1d2733;">Zóna #1</span>
<div style="position:absolute;left:429.7px;top:618px;width:26.5px;height:18px;background:#f1f3f6;border-radius:3.500px"><span id="t61" class="t" style="left:6.5px;top:9.2px;font-size:11.5px;color:#4a5563;letter-spacing:0.703px;">10</span></div>
<div style="position:absolute;left:221px;top:644px;width:242.7px;height:1px;background:#e3e5e9"></div>
<svg style="position:absolute;left:229.3px;top:657px;" width="9.5" height="9.5" viewBox="0 0 9.5 9.5"><circle cx="4.750" cy="4.750" r="3.900" fill="none" stroke="#1d2733" stroke-width="1.200"/></svg>
<span id="t62" class="t" style="left:243.0px;top:662.0px;font-size:11.5px;color:#1d2733;letter-spacing:0.049px;-webkit-text-stroke:0.2px #1d2733;">Zóna #2</span>
<div style="position:absolute;left:435.7px;top:652.8px;width:20.5px;height:18px;background:#f1f3f6;border-radius:3.500px"><span id="t63" class="t" style="left:10.2px;top:9.2px;font-size:11.5px;color:#4a5563;transform:translateX(-50%);">9</span></div>
<div style="position:absolute;left:221px;top:678.8px;width:242.7px;height:1px;background:#e3e5e9"></div>
<svg style="position:absolute;left:229.3px;top:691.7px;" width="9.5" height="9.5" viewBox="0 0 9.5 9.5"><circle cx="4.750" cy="4.750" r="3.900" fill="none" stroke="#1d2733" stroke-width="1.200"/></svg>
<span id="t64" class="t" style="left:243.0px;top:696.7px;font-size:11.5px;color:#1d2733;letter-spacing:0.049px;-webkit-text-stroke:0.2px #1d2733;">Zóna #3</span>
<div style="position:absolute;left:435.7px;top:687.5px;width:20.5px;height:18px;background:#f1f3f6;border-radius:3.500px"><span id="t65" class="t" style="left:10.2px;top:9.2px;font-size:11.5px;color:#4a5563;transform:translateX(-50%);">8</span></div>
<div style="position:absolute;left:221px;top:713.5px;width:242.7px;height:1px;background:#e3e5e9"></div>
<svg style="position:absolute;left:229.3px;top:726.4px;" width="9.5" height="9.5" viewBox="0 0 9.5 9.5"><circle cx="4.750" cy="4.750" r="3.900" fill="none" stroke="#1d2733" stroke-width="1.200"/></svg>
<span id="t66" class="t" style="left:243.0px;top:731.4px;font-size:11.5px;color:#1d2733;letter-spacing:0.049px;-webkit-text-stroke:0.2px #1d2733;">Zóna #4</span>
<div style="position:absolute;left:435.7px;top:722.2px;width:20.5px;height:18px;background:#f1f3f6;border-radius:3.500px"><span id="t67" class="t" style="left:10.2px;top:9.2px;font-size:11.5px;color:#4a5563;transform:translateX(-50%);">7</span></div>
<div style="position:absolute;left:221px;top:748.2px;width:242.7px;height:1px;background:#e3e5e9"></div>
<svg style="position:absolute;left:229.3px;top:761px;" width="9.5" height="9.5" viewBox="0 0 9.5 9.5"><circle cx="4.750" cy="4.750" r="3.900" fill="none" stroke="#1d2733" stroke-width="1.200"/></svg>
<span id="t68" class="t" style="left:243.0px;top:766.0px;font-size:11.5px;color:#1d2733;letter-spacing:0.049px;-webkit-text-stroke:0.2px #1d2733;">Zóna #5</span>
<div style="position:absolute;left:435.7px;top:756.8px;width:20.5px;height:18px;background:#f1f3f6;border-radius:3.500px"><span id="t69" class="t" style="left:10.2px;top:9.2px;font-size:11.5px;color:#4a5563;transform:translateX(-50%);">6</span></div>
<div style="position:absolute;left:221px;top:782.8px;width:242.7px;height:1px;background:#e3e5e9"></div>
<svg style="position:absolute;left:229.3px;top:795.6px;" width="9.5" height="9.5" viewBox="0 0 9.5 9.5"><circle cx="4.750" cy="4.750" r="3.900" fill="none" stroke="#1d2733" stroke-width="1.200"/></svg>
<span id="t70" class="t" style="left:243.0px;top:800.6px;font-size:11.5px;color:#1d2733;letter-spacing:0.049px;-webkit-text-stroke:0.2px #1d2733;">Zóna #6</span>
<div style="position:absolute;left:435.7px;top:791.4px;width:20.5px;height:18px;background:#f1f3f6;border-radius:3.500px"><span id="t71" class="t" style="left:10.2px;top:9.2px;font-size:11.5px;color:#4a5563;transform:translateX(-50%);">5</span></div>
<div style="position:absolute;left:199px;top:954px;width:287.5px;height:64px;background:#f9fafb;border-top:1px solid #e3e6ec;border-radius:0 0 3px 3px;box-sizing:border-box"></div>
<div style="position:absolute;left:221px;top:970px;width:242.7px;height:33px;background:#2fb344;border-radius:4px;box-shadow:0 1px 1px rgba(0,0,0,.06)"></div>
<svg style="position:absolute;left:291px;top:981.5px;" width="10" height="10" viewBox="0 0 10 10"><g fill="none" stroke="#fff" stroke-width="1.300" stroke-linejoin="round"><path d="M1 2.200A1.200 1.200 0 0 1 2.200 1h4.900L9 2.900v4.900A1.200 1.200 0 0 1 7.800 9H2.200A1.200 1.200 0 0 1 1 7.800z"/><path d="M3.300 1v2.300h2.800V1"/><circle cx="5" cy="6.200" r="1"/></g></svg>
<span id="t72" class="t" style="left:309.5px;top:986.6px;font-size:14px;color:#fff;letter-spacing:0.085px;-webkit-text-stroke:0.3px #fff;">Uložit Definici</span>
<div style="position:absolute;left:18.8px;top:985.6px;width:141px;height:37.5px;background:#72a4f2;border-radius:6px;box-shadow:0 1px 3px rgba(40,60,120,.18)"></div>
<svg style="position:absolute;left:30px;top:997.5px;" width="22.5" height="15.5" viewBox="0 0 22.5 15.5"><path d="M3.200 1.200h12.600c3.200 0 5.400 1.900 5.400 4.500s-2.100 4.300-4.700 4.300c-.9 2.600-3 4.300-6.200 4.300H8.200c-3.900 0-6.900-2.300-6.900-6.700V3.100c0-1.100.8-1.900 1.900-1.900z" fill="#fff" stroke="#202020" stroke-width="1.700"/><path d="M16.300 4v3.600c1.300 0 2.200-.7 2.200-1.800S17.600 4 16.300 4z" fill="#202020"/><path d="M9 11.600C6.600 9.800 5.300 8.500 5.300 6.900c0-1.300 1-2.200 2.100-2.200.7 0 1.300.3 1.600.9.300-.6.900-.9 1.600-.9 1.100 0 2.100.9 2.100 2.200 0 1.600-1.300 2.900-3.700 4.700z" fill="#ff5a16"/></svg>
<span id="t73" class="t" style="left:56.9px;top:1005.0px;font-size:14px;color:#fff;font-weight:700;letter-spacing:-0.626px;">Podpořit vývoj</span>
<div style="position:absolute;left:503px;top:267px;width:899.5px;height:752px;background:#f0f1f3;border:1px solid #dfe2e7;border-top-color:#d0d3d9;border-radius:4px;box-sizing:border-box"></div>
<svg style="position:absolute;left:687px;top:267px" width="531.500" height="752" viewBox="687 267 531.500 752"><defs>
<linearGradient id="pg" x1="0" y1="0" x2="0" y2="1">
<stop offset="0" stop-color="#cfdef3"/><stop offset=".22" stop-color="#d5e2f4"/><stop offset=".5" stop-color="#dde7f5"/>
<stop offset=".72" stop-color="#e3e8f2"/><stop offset="1" stop-color="#e2e4ec"/></linearGradient>
<linearGradient id="le" x1="0" y1="0" x2="0" y2="1"><stop offset="0" stop-color="#6c6c6c"/><stop offset=".4" stop-color="#838180"/><stop offset=".6" stop-color="#a3a3a6"/><stop offset="1" stop-color="#b9bbc1"/></linearGradient>
<linearGradient id="pl" x1="0" y1="0" x2="1" y2="0">
<stop offset="0" stop-color="#fff" stop-opacity=".14"/><stop offset=".35" stop-color="#fff" stop-opacity=".03"/>
<stop offset=".7" stop-color="#fff" stop-opacity="0"/><stop offset="1" stop-color="#8090b0" stop-opacity=".02"/></linearGradient>
<radialGradient id="tr" gradientUnits="userSpaceOnUse" cx="1230" cy="250" r="420"><stop offset="0" stop-color="#9dbcee" stop-opacity=".2"/><stop offset=".55" stop-color="#9dbcee" stop-opacity=".07"/><stop offset="1" stop-color="#9dbcee" stop-opacity="0"/></radialGradient>
<linearGradient id="re" x1="0" y1="0" x2="0" y2="1"><stop offset="0" stop-color="#a9b9d4"/><stop offset=".5" stop-color="#8e98ab"/><stop offset="1" stop-color="#6c7380"/></linearGradient>
</defs><rect x="687" y="267" width="531" height="752" fill="url(#pg)"/><rect x="687" y="267" width="531" height="752" fill="url(#pl)"/><circle cx="823.4" cy="492.2" r="99.8" fill="#7aa688" stroke="#4a4a3a" stroke-width="0.5"/><circle cx="823.4" cy="492.2" r="82" fill="#e6ebaa" stroke="#4a4a3a" stroke-width="0.5"/><circle cx="823.4" cy="492.2" r="64.3" fill="#c37d2d" stroke="#4a4a3a" stroke-width="0.5"/><circle cx="823.4" cy="492.2" r="45.8" fill="#eef0c8" stroke="#4a4a3a" stroke-width="0.5"/><circle cx="823.4" cy="492.2" r="28.3" fill="#e4d632" stroke="#4a4a3a" stroke-width="0.5"/><circle cx="823.4" cy="492.2" r="10.8" fill="#c47328" stroke="#4a4a3a" stroke-width="0.5"/><circle cx="1084.9" cy="492.1" r="99.8" fill="#4788c6" stroke="#15214c" stroke-width="0.95"/><circle cx="1084.9" cy="492.1" r="82" fill="#e4ebf6" stroke="#15214c" stroke-width="0.95"/><circle cx="1084.9" cy="492.1" r="64.3" fill="#b03f2c" stroke="#15214c" stroke-width="0.95"/><circle cx="1084.9" cy="492.1" r="45.8" fill="#e4ebf6" stroke="#15214c" stroke-width="0.95"/><circle cx="1084.9" cy="492.1" r="28.3" fill="#dfd047" stroke="#15214c" stroke-width="0.95"/><circle cx="1084.9" cy="492.1" r="10.8" fill="#b03f2c" stroke="#15214c" stroke-width="0.95"/><circle cx="954.3" cy="646.6" r="57.1" fill="#4c8cca" stroke="#15214c" stroke-width="1"/><circle cx="954.3" cy="646.6" r="46.1" fill="#e7edf6" stroke="#15214c" stroke-width="1"/><circle cx="954.3" cy="646.6" r="36.4" fill="#b6402b" stroke="#15214c" stroke-width="1"/><circle cx="954.3" cy="646.6" r="26" fill="#e7edf6" stroke="#15214c" stroke-width="1"/><circle cx="954.3" cy="646.6" r="16.4" fill="#e4d64a" stroke="#15214c" stroke-width="1"/><circle cx="954.3" cy="646.6" r="6.2" fill="#b6402b" stroke="#15214c" stroke-width="1"/><circle cx="823.3" cy="792.5" r="99.8" fill="#4a8dcd" stroke="#15214c" stroke-width="0.95"/><circle cx="823.3" cy="792.5" r="82" fill="#eaeef5" stroke="#15214c" stroke-width="0.95"/><circle cx="823.3" cy="792.5" r="64.3" fill="#bb3f2a" stroke="#15214c" stroke-width="0.95"/><circle cx="823.3" cy="792.5" r="45.8" fill="#eaeef5" stroke="#15214c" stroke-width="0.95"/><circle cx="823.3" cy="792.5" r="28.3" fill="#ebdd4c" stroke="#15214c" stroke-width="0.95"/><circle cx="823.3" cy="792.5" r="10.8" fill="#bb3f2a" stroke="#15214c" stroke-width="0.95"/><circle cx="1084.9" cy="792.3" r="99.8" fill="#4a8dcd" stroke="#15214c" stroke-width="0.95"/><circle cx="1084.9" cy="792.3" r="82" fill="#eaeef5" stroke="#15214c" stroke-width="0.95"/><circle cx="1084.9" cy="792.3" r="64.3" fill="#b93f2a" stroke="#15214c" stroke-width="0.95"/><circle cx="1084.9" cy="792.3" r="45.8" fill="#eaeef5" stroke="#15214c" stroke-width="0.95"/><circle cx="1084.9" cy="792.3" r="28.3" fill="#e9db4c" stroke="#15214c" stroke-width="0.95"/><circle cx="1084.9" cy="792.3" r="10.8" fill="#b93f2a" stroke="#15214c" stroke-width="0.95"/><circle cx="823.4" cy="492.2" r="99.6" fill="none" stroke="#ee1216" stroke-width="2.150"/><circle cx="824.2" cy="492" r="82" fill="none" stroke="#ee1216" stroke-width="2.150"/><circle cx="824" cy="491.7" r="63.7" fill="none" stroke="#ee1216" stroke-width="2.150"/><circle cx="824" cy="491.9" r="44.1" fill="none" stroke="#ee1216" stroke-width="2.150"/><circle cx="822.9" cy="491.7" r="27.5" fill="none" stroke="#ee1216" stroke-width="2.150"/><circle cx="823.1" cy="492.7" r="9.9" fill="none" stroke="#ee1216" stroke-width="2.150"/><text x="822.7" y="406.9" text-anchor="middle" font-family="'Liberation Serif',serif" font-size="18" fill="#000" stroke="#000" stroke-width=".25">5</text><text x="822.7" y="424.3" text-anchor="middle" font-family="'Liberation Serif',serif" font-size="18" fill="#000" stroke="#000" stroke-width=".25">6</text><text x="822.7" y="442.3" text-anchor="middle" font-family="'Liberation Serif',serif" font-size="18" fill="#000" stroke="#000" stroke-width=".25">7</text><text x="822.7" y="462.1" text-anchor="middle" font-family="'Liberation Serif',serif" font-size="18" fill="#000" stroke="#000" stroke-width=".25">8</text><text x="822.7" y="478.5" text-anchor="middle" font-family="'Liberation Serif',serif" font-size="18" fill="#000" stroke="#000" stroke-width=".25">9</text><text x="822.7" y="499.8" text-anchor="middle" font-family="'Liberation Serif',serif" font-size="18" fill="#000" stroke="#000" stroke-width=".25">10</text><rect x="731.1" y="313" width="51.2" height="51.2" fill="#f4f7fb"/><rect x="732.3" y="314.2" width="48.8" height="48.8" fill="#252525"/><path d="M740.43 330.47h8.13v8.13h-8.13zM748.57 330.47h8.13v8.13h-8.13zM756.70 330.47h8.13v8.13h-8.13zM764.83 330.47h8.13v8.13h-8.13zM740.43 338.60h8.13v8.13h-8.13zM764.83 338.60h8.13v8.13h-8.13zM740.43 346.73h8.13v8.13h-8.13zM756.70 346.73h8.13v8.13h-8.13z" fill="#eef2f8" stroke="#eef2f8" stroke-width=".5" stroke-linejoin="round"/><rect x="1125.3" y="313" width="51.2" height="51.2" fill="#f4f7fb"/><rect x="1126.5" y="314.2" width="48.8" height="48.8" fill="#252525"/><path d="M1150.90 322.33h8.13v8.13h-8.13zM1159.03 322.33h8.13v8.13h-8.13zM1150.90 330.47h8.13v8.13h-8.13zM1159.03 330.47h8.13v8.13h-8.13zM1150.90 338.60h8.13v8.13h-8.13zM1134.63 346.73h8.13v8.13h-8.13zM1142.77 346.73h8.13v8.13h-8.13zM1159.03 346.73h8.13v8.13h-8.13z" fill="#eef2f8" stroke="#eef2f8" stroke-width=".5" stroke-linejoin="round"/><rect x="729.2" y="921.1" width="51.2" height="51.2" fill="#f4f7fb"/><rect x="730.4" y="922.3" width="48.8" height="48.8" fill="#252525"/><path d="M738.53 930.43h8.13v8.13h-8.13zM762.93 930.43h8.13v8.13h-8.13zM738.53 938.57h8.13v8.13h-8.13zM762.93 938.57h8.13v8.13h-8.13zM746.67 946.70h8.13v8.13h-8.13zM746.67 954.83h8.13v8.13h-8.13zM754.80 954.83h8.13v8.13h-8.13z" fill="#eef2f8" stroke="#eef2f8" stroke-width=".5" stroke-linejoin="round"/><rect x="1125" y="920.8" width="51.7" height="51.7" fill="#f4f7fb"/><rect x="1126.2" y="922" width="49.3" height="49.3" fill="#252525"/><path d="M1142.63 930.22h8.22v8.22h-8.22zM1159.07 930.22h8.22v8.22h-8.22zM1142.63 938.43h8.22v8.22h-8.22zM1134.42 946.65h8.22v8.22h-8.22zM1159.07 946.65h8.22v8.22h-8.22zM1134.42 954.87h8.22v8.22h-8.22zM1142.63 954.87h8.22v8.22h-8.22zM1150.85 954.87h8.22v8.22h-8.22z" fill="#eef2f8" stroke="#eef2f8" stroke-width=".5" stroke-linejoin="round"/><circle cx="754.4" cy="338.4" r="4.600" fill="#1212ee" stroke="#fff" stroke-width="1.700"/><text x="765" y="340.3" text-anchor="middle" font-family="'Liberation Sans',sans-serif" font-size="9.500" fill="#fff" stroke="#9aa3b0" stroke-width=".25">1</text><circle cx="1151.9" cy="334.6" r="4.600" fill="#1212ee" stroke="#fff" stroke-width="1.700"/><text x="1163" y="335.5" text-anchor="middle" font-family="'Liberation Sans',sans-serif" font-size="9.500" fill="#fff" stroke="#9aa3b0" stroke-width=".25">2</text><circle cx="1151.9" cy="940.2" r="4.600" fill="#1212ee" stroke="#fff" stroke-width="1.700"/><text x="1162.6" y="943.8" text-anchor="middle" font-family="'Liberation Sans',sans-serif" font-size="9.500" fill="#fff" stroke="#9aa3b0" stroke-width=".25">3</text><circle cx="750" cy="945" r="4.600" fill="#1212ee" stroke="#fff" stroke-width="1.700"/><text x="760.3" y="947.7" text-anchor="middle" font-family="'Liberation Sans',sans-serif" font-size="9.500" fill="#fff" stroke="#9aa3b0" stroke-width=".25">4</text><path d="M687 267h3.200L688.300 1019H687z" fill="url(#le)"/><path d="M690.200 267h1.300L689.600 1019h-1.300z" fill="#eef3fb" fill-opacity=".8"/><rect x="687" y="267" width="531" height="1" fill="#8d98ad" fill-opacity=".8"/><rect x="1215.700" y="267" width="1.200" height="752" fill="#f4f6fa"/><rect x="1216.900" y="267" width="1.200" height="752" fill="url(#re)"/><rect x="687" y="1016.300" width="531" height="1.200" fill="#f4f6fa"/><rect x="687" y="1017.500" width="531" height="1.300" fill="#8a8f9b"/></svg>
<div style="position:absolute;left:809px;top:275px;width:287px;height:22px;background:rgba(32,44,66,.92);border-radius:4.500px"></div>
<span id="t74" class="t" style="left:816.6px;top:286.9px;font-size:13.3px;color:#fff;letter-spacing:1.135px;-webkit-text-stroke:0.5px #fff;">Klikněte a táhněte pro vytvoření kruhu.</span>
<div style="position:absolute;left:0px;top:1006px;width:19px;height:35px;background:radial-gradient(ellipse 19px 35px at 100% 0,rgba(0,0,0,0) 94%,#8aa79b 97%,#23604a 100%)"></div>
<div style="position:absolute;left:1581px;top:1006px;width:19px;height:35px;background:radial-gradient(ellipse 19px 35px at 0 0,rgba(0,0,0,0) 94%,#7fa6c8 97%,#1f64a0 100%)"></div>
</body></html>
